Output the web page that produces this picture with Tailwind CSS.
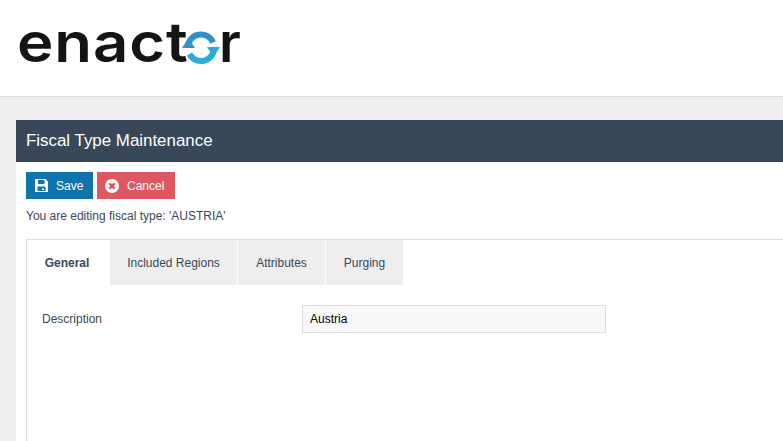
<!DOCTYPE html>
<html lang="en">
    <head>
        <meta charset="UTF-8" />
        <script src="https://cdn.jsdelivr.net/npm/@tailwindcss/browser@4"></script>
        <title>Fiscal Type Maintenance</title>
    </head>
    <body class="h-[441px] overflow-hidden bg-[#eeeeee] font-['Liberation_Sans',Arial,sans-serif] text-xs text-[#3a4858]">
        <!-- Logo header -->
        <header class="h-[97px] bg-white border-b border-[#dddddd] pl-[17px] pt-[12px]">
            <div class="flex items-start h-[60px] text-[#141414] font-['Inter',sans-serif] font-semibold text-[55px] leading-[60px]">
                <span class="w-[165px] origin-left scale-x-[1.12] tracking-[0.8px]">enact</span>
                <svg class="w-[38px] h-[38px] mt-[18px]" viewBox="0 0 38 38" fill="none">
                    <path d="M6 18 A13 13 0 0 1 31 12.5" stroke="#2e93c8" stroke-width="6" />
                    <path d="M32 17 A13 13 0 0 1 7.5 24" stroke="#2eaade" stroke-width="6" />
                    <path d="M0 18 L6.5 8 L13 18 Z" fill="#2e93c8" />
                    <path d="M25 17 L38 17 L31.5 27 Z" fill="#2eaade" />
                </svg>
                <span class="-ml-[1px]">r</span>
            </div>
        </header>

        <main class="ml-4 mt-[23px] bg-white h-[321px]">
            <h1 class="h-[42px] bg-[#394859] text-white text-[16.9px] leading-[42px] pl-2.5">
                Fiscal Type Maintenance
            </h1>
            <div class="pl-2.5 pt-2.5">
                <div class="flex gap-1 h-[27px]">
                    <button class="flex items-center w-[67px] bg-[#0f73ad] text-white pl-[9px] gap-2">
                        <svg class="w-[13px] h-[13px]" viewBox="0 0 13 13">
                            <path fill="#fff" fill-rule="evenodd" d="M0 0H10.5L13 2.5V13H0ZM3 1V5H9.5V1ZM2.5 7.5V12H10.5V7.5ZM7 9.5H9V11H7Z" />
                        </svg>
                        Save
                    </button>
                    <button class="flex items-center w-[78px] bg-[#e05661] text-white pl-2 gap-2">
                        <svg class="w-[14px] h-[14px]" viewBox="0 0 14 14">
                            <circle cx="7" cy="7" r="7" fill="#fff" />
                            <path d="M4.4 4.4L9.6 9.6M9.6 4.4L4.4 9.6" stroke="#e05661" stroke-width="2.4" />
                        </svg>
                        Cancel
                    </button>
                </div>
                <p class="mt-[10px] h-[14px] leading-[14px]">You are editing fiscal type: 'AUSTRIA'</p>

                <div class="mt-[16px] h-[202px] border-l border-t border-[#dddddd]">
                    <ul class="flex gap-px h-[45px]">
                        <li class="w-[82px] bg-white font-bold text-center pt-px pr-[2px] leading-[45px]">General</li>
                        <li class="w-[127px] bg-[#eeeeee] text-center pt-px leading-[45px]">Included Regions</li>
                        <li class="w-[87px] bg-[#eeeeee] text-center pt-px leading-[45px]">Attributes</li>
                        <li class="w-[77px] bg-[#eeeeee] text-center pt-px leading-[45px]">Purging</li>
                    </ul>
                    <div class="flex items-center mt-[20px] pl-[15px]">
                        <label class="w-[260px]">Description</label>
                        <input
                            class="w-[304px] h-[28px] bg-[#f8f8f8] border border-[#dddddd] px-[7px] text-xs text-black"
                            value="Austria"
                        />
                    </div>
                </div>
            </div>
        </main>
    </body>
</html>
